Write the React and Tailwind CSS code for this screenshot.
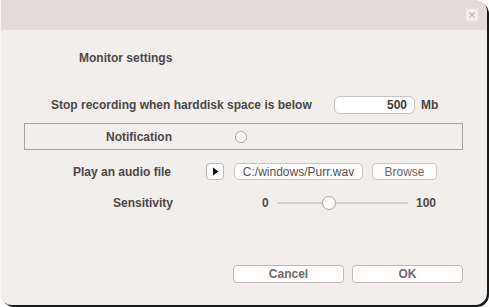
export default function App() {
  const font = { fontFamily: '"Liberation Sans", Arial, sans-serif' };
  return (
    <div className="w-[489px] h-[307px] bg-white overflow-hidden" style={font}>
      <div className="w-[487px] h-[305px] bg-[#f1eeeb] rounded-tr-[12px] rounded-b-[12px] shadow-[2px_2px_0_#1a1a1a] overflow-hidden border-l border-[#f7f5f3] flex flex-col">
        <div className="h-[30px] bg-[#e2dcd9] flex items-start justify-end pr-[9px] pt-[9px]">
          <div className="w-[12px] h-[12px] bg-[#f3f0ee] rounded-[2px] flex items-center justify-center">
            <svg width="8" height="8" viewBox="0 0 8 8">
              <path d="M1.5 1.5 L6.5 6.5 M6.5 1.5 L1.5 6.5" stroke="#bdb7b4" strokeWidth="1.4" />
            </svg>
          </div>
        </div>
        <div className="flex flex-col text-[12px] font-bold text-[#4d4747] leading-[14px]">
          <div className="pl-[78px] pt-[21px]">Monitor settings</div>

          <div className="flex items-center mt-[31px] h-[18px]">
            <div className="pl-[50px] w-[310px] whitespace-nowrap">Stop recording when harddisk space is below</div>
            <div className="ml-[23px] w-[81px] h-[18px] bg-white border border-[#c9c4c1] rounded-[6px] flex items-center justify-end pr-[7px] text-[#3f3a3a]">500</div>
            <div className="ml-[6px]">Mb</div>
          </div>

          <div className="ml-[23px] mr-[24px] mt-[9px] h-[27px] border border-[#a8a3a0] flex items-center">
            <div className="w-[147px] text-right">Notification</div>
            <div className="ml-[63px] w-[12px] h-[12px] rounded-full bg-white border border-[#aaa4a1]"></div>
          </div>

          <div className="flex items-center mt-[13px] h-[17px]">
            <div className="w-[170px] text-right">Play an audio file</div>
            <div className="ml-[35px] w-[18px] h-[17px] bg-white border border-[#bcb7b4] rounded-[4px] flex items-center justify-center">
              <svg width="7" height="9" viewBox="0 0 7 9"><path d="M1 0.5 L6.5 4.5 L1 8.5 Z" fill="#111" /></svg>
            </div>
            <div className="ml-[10px] w-[129px] h-[17px] bg-white border border-[#c9c4c1] rounded-[5px] flex items-center justify-center font-normal text-[#555050]">C:/windows/Purr.wav</div>
            <div className="ml-[9px] w-[65px] h-[17px] bg-white border border-[#c9c4c1] rounded-[4px] flex items-center justify-center font-normal text-[#6a6464]">Browse</div>
          </div>

          <div className="flex items-center mt-[16px] h-[14px]">
            <div className="w-[172px] text-right">Sensitivity</div>
            <div className="ml-[89px] w-[7px]">0</div>
            <div className="ml-[8px] w-[131px] h-[2px] bg-[#d8d3d0] relative">
              <div className="absolute left-[45px] -top-[6px] w-[14px] h-[14px] rounded-full bg-white border border-[#a9a4a1]"></div>
            </div>
            <div className="ml-[8px]">100</div>
          </div>

          <div className="flex mt-[55px] pl-[232px] gap-[8px]">
            <div className="w-[111px] h-[18px] bg-white border border-[#bdb8b5] rounded-[4px] flex items-center justify-center text-[#6f6a6a]">Cancel</div>
            <div className="w-[111px] h-[18px] bg-white border border-[#bdb8b5] rounded-[4px] flex items-center justify-center text-[#6f6a6a]">OK</div>
          </div>
        </div>
      </div>
    </div>
  );
}
